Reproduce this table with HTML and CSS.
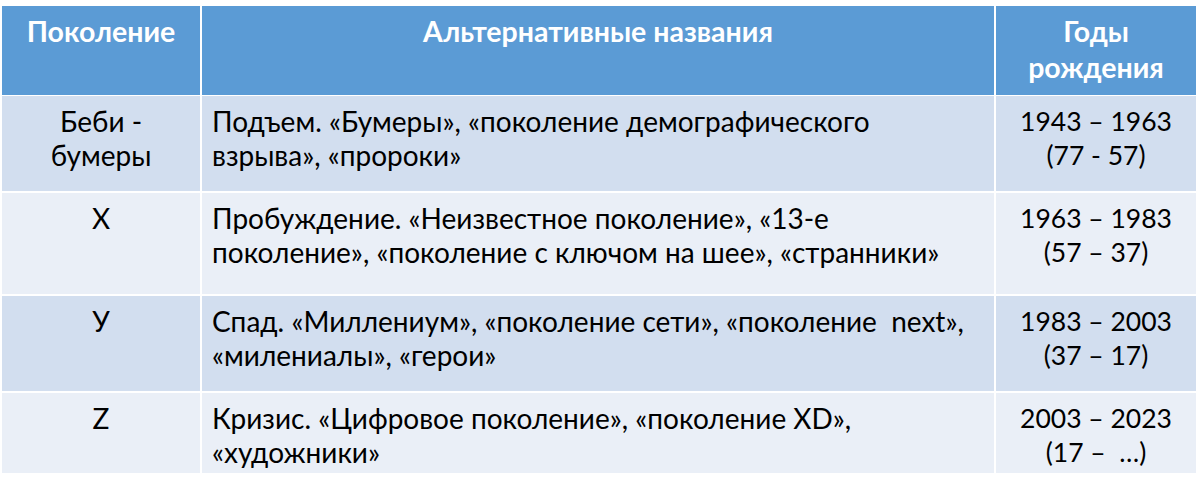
FILE: index.html
```html
<!DOCTYPE html>
<html lang="ru">
<head>
<meta charset="utf-8">
<title>Поколения</title>
<link rel="stylesheet" href="styles.css">
</head>
<body>
<div class="table">
  <div class="cell head c1">Поколение</div>
  <div class="cell head c2">Альтернативные названия</div>
  <div class="cell head c3">Годы<br>рождения</div>

  <div class="cell odd r1 c1">Беби -<br>бумеры</div>
  <div class="cell odd r1 c2">Подъем. «Бумеры», «поколение демографического<br>взрыва», «пророки»</div>
  <div class="cell odd r1 c3 years">1943 – 1963<br>(77 - 57)</div>

  <div class="cell even r2 c1">Х</div>
  <div class="cell even r2 c2">Пробуждение. «Неизвестное поколение», «13-е<br>поколение», «поколение с ключом на шее», «странники»</div>
  <div class="cell even r2 c3 years">1963 – 1983<br>(57 – 37)</div>

  <div class="cell odd r3 c1">У</div>
  <div class="cell odd r3 c2">Спад. «Миллениум», «поколение сети», «поколение &nbsp;next»,<br>«милениалы», «герои»</div>
  <div class="cell odd r3 c3 years">1983 – 2003<br>(37 – 17)</div>

  <div class="cell even r4 c1">Z</div>
  <div class="cell even r4 c2">Кризис. «Цифровое поколение», «поколение ХD»,<br>«художники»</div>
  <div class="cell even r4 c3 years">2003 – 2023<br>(17 – &nbsp;…)</div>
</div>
</body>
</html>
```
FILE: styles.css
```css
html, body {
  margin: 0;
  padding: 0;
  background: #ffffff;
}
body {
  padding: 6px 0 0 2px;
}
.table {
  width: 1194px;
  display: grid;
  grid-template-columns: 198px 792px 200px;
  grid-template-rows: 88px 95px 101px 95px 80px;
  column-gap: 2px;
  row-gap: 2px;
  font-family: Lato, "Open Sans", "Noto Sans", sans-serif;
  font-size: 28px;
  line-height: 34px;
  color: #000000;
}
.cell {
  padding-top: 8px;
  white-space: nowrap;
}
.head {
  background: #5b9bd5;
  color: #ffffff;
  font-weight: bold;
  font-size: 28.5px;
  line-height: 36px;
  padding-top: 7px;
  margin-bottom: -1px;
}
.odd { background: #d2deef; }
.even { background: #eaeff7; }
.c1, .c3 { text-align: center; }
.c2 { padding-left: 10px; }
.head.c2 { padding-left: 0; text-align: center; }
.years { font-size: 26.5px; }
```
